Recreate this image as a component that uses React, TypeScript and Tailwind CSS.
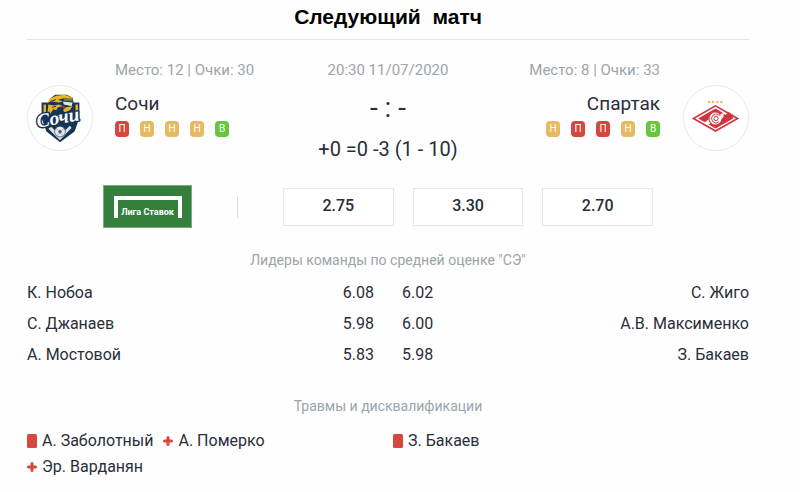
import React from 'react'

type Result = 'П' | 'Н' | 'В'

const resultColors: Record<Result, string> = {
  П: 'bg-[#d3473d]',
  Н: 'bg-[#e6b962]',
  В: 'bg-[#65c73c]',
}

const leaders = [
  { home: 'К. Нобоа', homeScore: '6.08', awayScore: '6.02', away: 'С. Жиго' },
  { home: 'С. Джанаев', homeScore: '5.98', awayScore: '6.00', away: 'А.В. Максименко' },
  { home: 'А. Мостовой', homeScore: '5.83', awayScore: '5.98', away: 'З. Бакаев' },
]

const odds = ['2.75', '3.30', '2.70']

const Form: React.FC<{ results: Result[] }> = ({ results }) => (
  <ul className="flex gap-[11px]">
    {results.map((r, i) => (
      <li
        key={i}
        className={`flex h-4 w-[14px] items-center justify-center rounded-[4px] text-[10px] leading-4 text-white ${resultColors[r]}`}
      >
        {r}
      </li>
    ))}
  </ul>
)

const SochiLogo = () => (
  <svg viewBox="0 0 66 66" className="h-full w-full" role="img" aria-label="Сочи">
    <path d="M14 17h7l2-4 5-4h12l6 3 1 5h6v16l-5 14-15 11-14-11-5-14z" fill="#173454" />
    <path d="M16 19h2.500v12H16zM49 19h2.500v10H49z" fill="#e3b62c" />
    <path d="M20 17l3-4 6-3 9-1 8 3-1 2-9-1-5 1 5 2-4 1-7-1-4 1z" fill="#e3b62c" />
    <path d="M21 19l6 1 5-1 4 2-5 1-2 3-3-1-3 5-1-3-2 2z" fill="#e3b62c" />
    <path d="M23 16l6-2M25 22l4-1" stroke="#173454" />
    <path d="M37 12l9 1v3l-9-1z" fill="#7c7a3a" />
    <path d="M36 16l10 1-1 4-8-2z" fill="#dce5ea" />
    <path d="M36 25l3-3 7-1-3 4-5 2z" fill="#e3b62c" />
    <path d="M35 20l5 2-3 2z" fill="#b9353e" />
    <path d="M21 44l12 12 12-13-2-2-10 10-9-9z" fill="#d8dfe4" />
    <circle cx="33" cy="47" r="5.500" fill="#e4e9ed" stroke="#173454" strokeWidth=".6" />
    <path d="M33 45l2 1.500-.8 2.500h-2.400l-.8-2.500z" fill="#52616e" />
    <path d="M29 44l1.500 1M37 44l-1.500 1M30 51l1-1M36 51l-1-1" stroke="#8b969f" />
    <text
      x="10"
      y="43"
      transform="rotate(-10 10 43)"
      className="font-['Liberation_Serif',serif] text-[20px] font-bold italic"
      fill="#fff"
      stroke="#173454"
      strokeWidth="3"
      strokeLinejoin="round"
      paintOrder="stroke"
    >
      Сочи
    </text>
  </svg>
)

const SpartakLogo = () => (
  <svg viewBox="0 0 66 66" className="h-full w-full" role="img" aria-label="Спартак">
    <g fill="#ebb65e">
      <circle cx="26" cy="16.500" r="1.300" />
      <circle cx="30" cy="16.500" r="1.300" />
      <circle cx="34.500" cy="16.500" r="1.300" />
      <circle cx="38.500" cy="16.500" r="1.300" />
    </g>
    <path d="M8 33.500l24.500-14 24.500 14-24.500 14z" fill="#d0353d" />
    <path d="M11.500 33.500l21-12 21 12-21 12z" fill="#fff" />
    <path d="M14.500 33.500l18-10.200 8 4.500-14 5.700-5 4z" fill="#d0353d" />
    <path d="M25 39.500l12-4 9-8.700 4.500 3.200 0 3.500-18 10.200z" fill="#d0353d" />
    <path d="M41 28.500l9 5-10 6" fill="#d0353d" />
    <circle cx="32" cy="33.500" r="6.500" fill="#fff" />
    <path d="M37 28a7 7 0 1 0 0 11" fill="none" stroke="#d0353d" strokeWidth="1.200" />
    <path d="M36 30a4.600 4.600 0 1 0 0 7M37 27v4" fill="none" stroke="#d0353d" />
    <circle cx="33" cy="33.500" r="2.200" fill="#fff" stroke="#d0353d" />
  </svg>
)

const RedCard = () => (
  <svg viewBox="0 0 10 14" className="h-[14px] w-[10px] shrink-0" role="img" aria-label="Дисквалификация">
    <rect width="10" height="14" rx="1.500" fill="#d6483e" />
  </svg>
)

const Injury = () => (
  <svg viewBox="0 0 10 10" className="h-[10px] w-[10px] shrink-0" role="img" aria-label="Травма">
    <path d="M5 1.500v7M1.500 5h7" stroke="#d6483e" strokeWidth="3" strokeLinecap="round" />
  </svg>
)

const Absentee: React.FC<{ name: string; card?: boolean }> = ({ name, card }) => (
  <li className="flex items-center gap-[5px]">
    {card ? <RedCard /> : <Injury />}
    {name}
  </li>
)

const App: React.FC = () => {
  return (
    <main className="bg-[#fefefe] pr-[51px] pb-3 pl-[27px] font-['Roboto','Liberation_Sans',sans-serif] text-[#2a2e39]">
      <h1 className="border-b border-[#e4e6e6] pt-[3px] pb-2 text-center font-['Liberation_Sans',Arial,sans-serif] text-[21px] leading-7 font-bold whitespace-pre text-black">
        Следующий  матч
      </h1>

      {/* Teams */}
      <section className="grid grid-cols-[1fr_auto_1fr] pt-5">
        <div className="flex">
          <div className="mt-[25px] h-[66px] w-[66px] shrink-0 rounded-full border border-[#e8e8e8] bg-white">
            <SochiLogo />
          </div>
          <div className="pl-[22px]">
            <p className="text-[15px] leading-5 whitespace-nowrap text-[#9ba5ab]">Место: 12 | Очки: 30</p>
            <h2 className="mt-3 mb-[5px] text-[19px] leading-6">Сочи</h2>
            <Form results={['П', 'Н', 'Н', 'Н', 'В']} />
          </div>
        </div>

        <div className="text-center whitespace-nowrap">
          <p className="text-[15px] leading-5 text-[#9ba5ab]">20:30 11/07/2020</p>
          <p className="mt-3 text-[28px] leading-8">- : -</p>
          <p className="mt-[13px] text-xl leading-6">+0 =0 -3 (1 - 10)</p>
        </div>

        <div className="flex justify-end">
          <div className="flex flex-col items-end pr-[23px]">
            <p className="text-[15px] leading-5 whitespace-nowrap text-[#9ba5ab]">Место: 8 | Очки: 33</p>
            <h2 className="mt-3 mb-[5px] text-[19px] leading-6">Спартак</h2>
            <Form results={['Н', 'П', 'П', 'Н', 'В']} />
          </div>
          <div className="mt-[25px] h-[66px] w-[66px] shrink-0 rounded-full border border-[#e8e8e8] bg-white">
            <SpartakLogo />
          </div>
        </div>
      </section>

      {/* Odds */}
      <section className="mt-6 flex items-center pr-24 pl-[76px]">
        <a
          href="#liga"
          className="flex h-[43px] w-[89px] shrink-0 items-center justify-center border border-[#78ad7d] bg-[#347f3d]"
        >
          <span className="flex h-[22px] w-[68px] items-end justify-center border-x-4 border-t-4 border-white font-['Roboto','Liberation_Sans',sans-serif] text-[9px] leading-3 font-bold whitespace-nowrap text-white">
            Лига Ставок
          </span>
        </a>
        <span className="mx-[45px] h-[22px] w-px shrink-0 bg-[#dcdede]"></span>
        <div className="flex grow gap-[19px]">
          {odds.map((odd) => (
            <button
              key={odd}
              type="button"
              className="h-[38px] flex-1 border border-[#e4e6e6] bg-white pb-[2px] text-base leading-5 font-medium"
            >
              {odd}
            </button>
          ))}
        </div>
      </section>

      {/* Leaders */}
      <section className="pt-[22px]">
        <h3 className="text-center text-sm leading-5 text-[#9ba5ab]">Лидеры команды по средней оценке "СЭ"</h3>
        <table className="mt-[7px] w-full table-fixed text-base leading-[31px]">
          <tbody>
            {leaders.map((row) => (
              <tr key={row.home}>
                <td>{row.home}</td>
                <td className="w-20 pr-[14px] text-right">{row.homeScore}</td>
                <td className="w-20 pl-[14px]">{row.awayScore}</td>
                <td className="text-right">{row.away}</td>
              </tr>
            ))}
          </tbody>
        </table>
      </section>

      {/* Injuries and suspensions */}
      <section className="pt-[26px]">
        <h3 className="text-center text-sm leading-5 text-[#9ba5ab]">Травмы и дисквалификации</h3>
        <div className="mt-3 grid grid-cols-2 gap-[10px] text-base leading-[26px]">
          <ul className="flex flex-wrap content-start gap-x-[10px] pr-16">
            <Absentee name="А. Заболотный" card />
            <Absentee name="А. Померко" />
            <Absentee name="Эр. Варданян" />
          </ul>
          <ul className="flex flex-wrap content-start gap-x-[10px]">
            <Absentee name="З. Бакаев" card />
          </ul>
        </div>
      </section>
    </main>
  )
}

export default App
